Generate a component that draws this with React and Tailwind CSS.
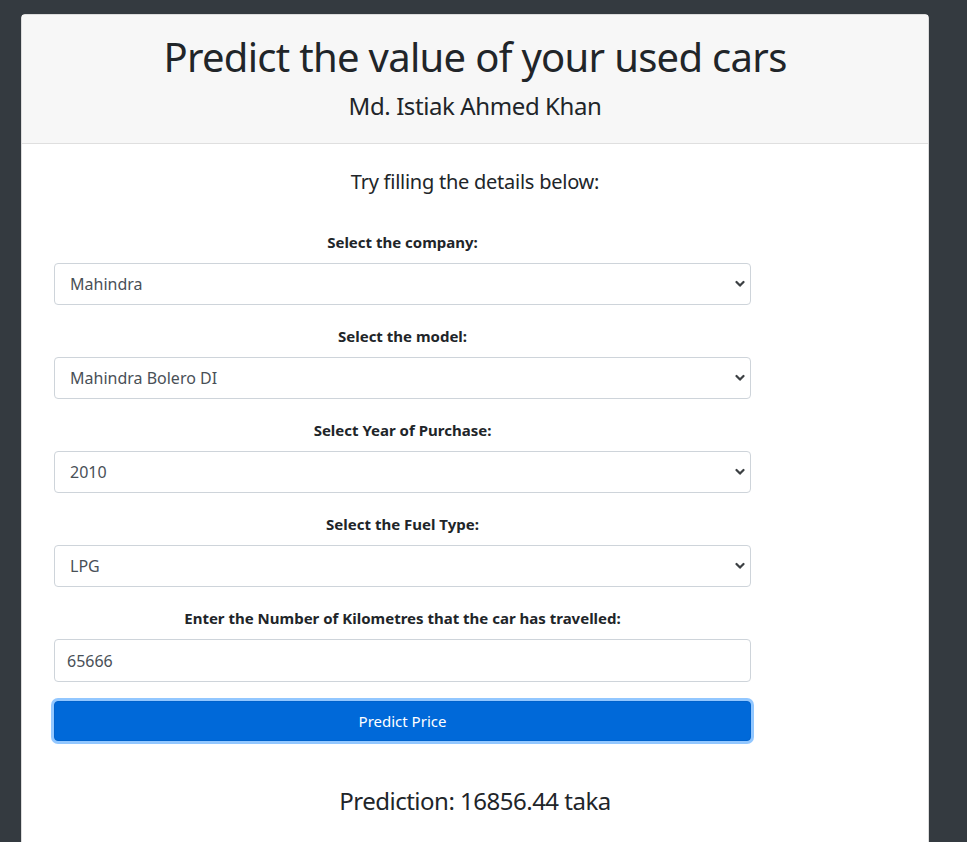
import { useState } from 'react';

const companies = ['Mahindra', 'Maruti', 'Hyundai', 'Honda', 'Toyota'];
const models = ['Mahindra Bolero DI', 'Mahindra Scorpio S10', 'Mahindra XUV500 W10'];
const years = ['2010', '2011', '2012', '2013', '2014'];
const fuels = ['LPG', 'Petrol', 'Diesel'];

function Chevron() {
  return (
    <svg
      className="pointer-events-none absolute right-[6px] top-1/2 -translate-y-1/2"
      width="10"
      height="8"
      viewBox="0 0 10 8"
    >
      <path d="M1.5 2 L5 5.6 L8.5 2" fill="none" stroke="#3c4043" strokeWidth="2.2" strokeLinecap="round" strokeLinejoin="round" />
    </svg>
  );
}

function Field({ label, children }) {
  return (
    <div className="mb-[20px]">
      <label className="mb-[10px] block text-center text-[15px] font-bold leading-[22px] text-[#212529]">
        {label}
      </label>
      {children}
    </div>
  );
}

function Select({ value, options, onChange }) {
  return (
    <div className="relative">
      <select
        value={value}
        onChange={(e) => onChange(e.target.value)}
        className="block h-[42px] w-full appearance-none rounded-[4px] border border-[#ced4da] bg-white pl-[15px] text-[16px] text-[#495057] outline-none"
      >
        {options.map((o) => (
          <option key={o}>{o}</option>
        ))}
      </select>
      <Chevron />
    </div>
  );
}

export default function App() {
  const [company, setCompany] = useState('Mahindra');
  const [model, setModel] = useState('Mahindra Bolero DI');
  const [year, setYear] = useState('2010');
  const [fuel, setFuel] = useState('LPG');
  const [km, setKm] = useState('65666');

  return (
    <div
      className="min-h-[842px] bg-[#343a40] pl-[21px] pt-[14px]"
      style={{ fontFamily: '"Noto Sans", "Open Sans", sans-serif' }}
    >
      <div className="w-[908px] rounded-t-[4px] border border-[#dcdcdc] bg-white">
        <div className="border-b border-[#dfdfdf] bg-[#f7f7f7] pb-[22px] pt-[18px] text-center text-[#212529]">
          <h1 className="text-[40px] leading-[48px] tracking-[-0.7px]">Predict the value of your used cars</h1>
          <h4 className="mt-[10px] text-[24px] leading-[30px] tracking-[-0.4px]">Md. Istiak Ahmed Khan</h4>
        </div>

        <div className="pb-[40px]">
          <h5 className="pt-[22px] text-center text-[20px] leading-[31px] tracking-[-0.25px] text-[#212529]">
            Try filling the details below:
          </h5>

          <form className="ml-[32px] mt-[34px] w-[697px]" onSubmit={(e) => e.preventDefault()}>
            <Field label="Select the company:">
              <Select value={company} options={companies} onChange={setCompany} />
            </Field>
            <Field label="Select the model:">
              <Select value={model} options={models} onChange={setModel} />
            </Field>
            <Field label="Select Year of Purchase:">
              <Select value={year} options={years} onChange={setYear} />
            </Field>
            <Field label="Select the Fuel Type:">
              <Select value={fuel} options={fuels} onChange={setFuel} />
            </Field>
            <div>
              <label className="mb-[10px] block text-center text-[15px] font-bold leading-[22px] text-[#212529]">
                Enter the Number of Kilometres that the car has travelled:
              </label>
              <input
                value={km}
                onChange={(e) => setKm(e.target.value)}
                className="block h-[43px] w-full rounded-[4px] border border-[#ced4da] bg-white pl-[12px] text-[16px] text-[#495057] outline-none"
              />
            </div>
            <button
              type="submit"
              className="mt-[19px] block h-[40px] w-full rounded-[4px] border border-[#0062cc] bg-[#0069d9] text-[15px] text-white shadow-[0_0_0_3px_rgba(38,143,255,0.5)]"
            >
              Predict Price
            </button>
          </form>

          <h3 className="mt-[44px] text-center text-[24px] leading-[32px] tracking-[-0.5px] text-[#212529]">
            Prediction: 16856.44 taka
          </h3>
        </div>
      </div>
    </div>
  );
}
